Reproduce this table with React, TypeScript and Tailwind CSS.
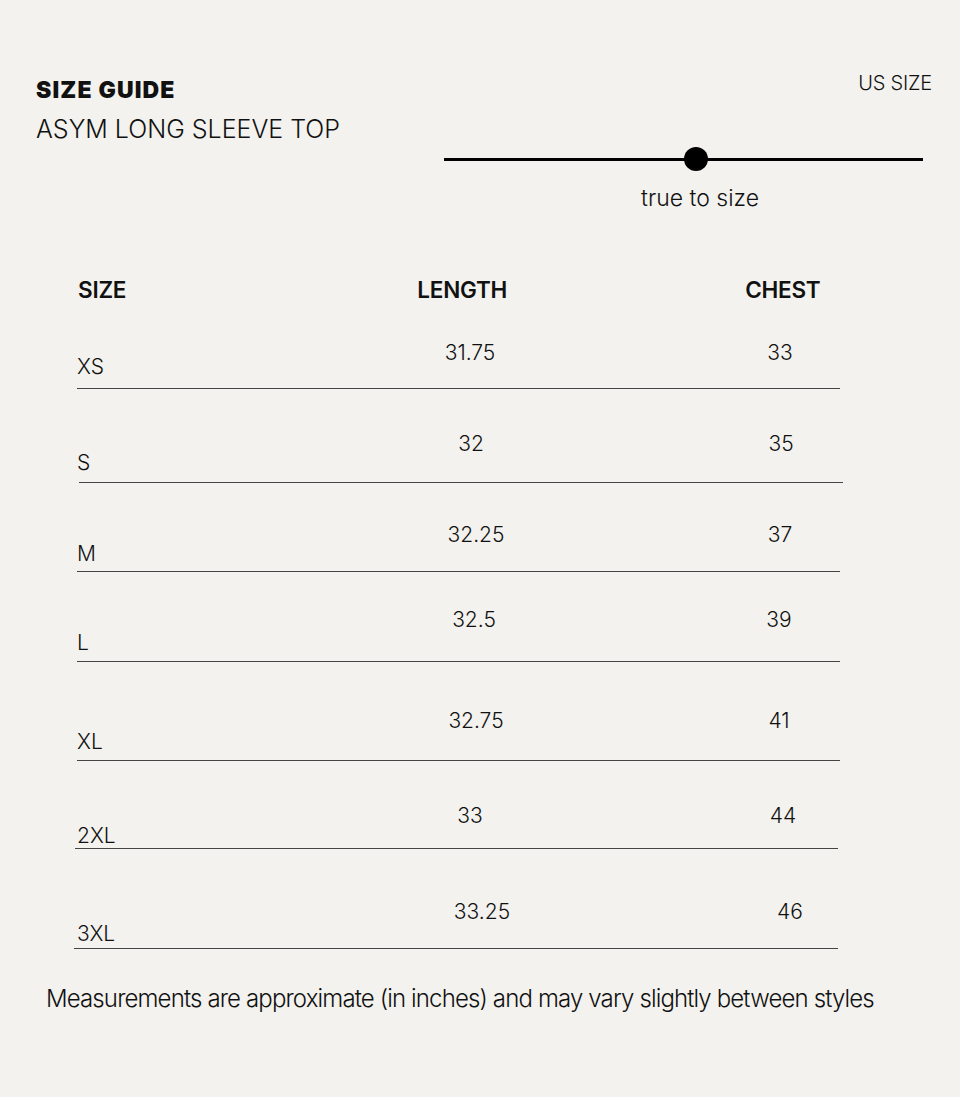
const rows = [
  { size: "XS", length: "31.75", chest: "33", h: "h-[81px]", lp: "pb-[9px]", vp: "pb-[23px]", lx: "ml-[323px]", cx: "ml-[260px]" },
  { size: "S", length: "32", chest: "35", h: "h-[94px]", lp: "pb-[7px]", vp: "pb-[26px]", lx: "ml-[324px]", cx: "ml-[260px]", line: "ml-[2px] w-[764px]" },
  { size: "M", length: "32.25", chest: "37", h: "h-[89px]", lp: "pb-[5px]", vp: "pb-[24px]", lx: "ml-[329px]", cx: "ml-[254px]" },
  { size: "L", length: "32.5", chest: "39", h: "h-[90px]", lp: "pb-[6px]", vp: "pb-[29px]", lx: "ml-[327px]", cx: "ml-[255px]" },
  { size: "XL", length: "32.75", chest: "41", h: "h-[99px]", lp: "pb-[6px]", vp: "pb-[27px]", lx: "ml-[329px]", cx: "ml-[253px]" },
  { size: "2XL", length: "33", chest: "44", h: "h-[88px]", lp: "pb-[0px]", vp: "pb-[20px]", lx: "ml-[323px]", cx: "ml-[263px]", line: "-ml-[2px] w-[763px]" },
  { size: "3XL", length: "33.25", chest: "46", h: "h-[100px]", lp: "pb-[2px]", vp: "pb-[24px]", lx: "ml-[335px]", cx: "ml-[258px]", line: "-ml-[3px] w-[764px]" },
];

export default function App() {
  return (
    <div className="w-[960px] h-[1097px] bg-[#f3f2ee] text-[#111] font-['Inter',sans-serif] overflow-hidden">
      <div className="flex justify-between pt-[70px] pl-[36px] pr-[28px]">
        <div className="flex flex-col">
          <div className="text-[23px] leading-[36px] font-black tracking-[0.05em] mt-[2px]">SIZE GUIDE</div>
          <div className="mt-[6px] text-[25px] leading-[30px] font-light">ASYM LONG SLEEVE TOP</div>
        </div>
        <div className="flex flex-col items-end">
          <div className="text-[20px] leading-[24px] font-light tracking-[-0.01em] mt-[1px]">US SIZE</div>
          <div className="mt-[52px] mr-[9px] w-[479px] flex flex-col items-center">
            <div className="w-full h-[24px] flex items-center justify-center relative">
              <div className="w-full h-[3px] bg-black"></div>
              <div className="absolute left-[240px] top-0 w-[24px] h-[24px] rounded-full bg-black"></div>
            </div>
            <div className="mt-[14px] ml-[33px] text-[23px] leading-[26px] font-light">true to size</div>
          </div>
        </div>
      </div>

      <div className="ml-[77px] mt-[61px] w-[763px]">
        <div className="flex h-[36px] items-center text-[22.5px] font-semibold tracking-[-0.01em]">
          <div className="ml-[1px]">SIZE</div>
          <div className="ml-[291px]">LENGTH</div>
          <div className="ml-[238px]">CHEST</div>
        </div>
        {rows.map((r) => (
          <div key={r.size} className={`${r.h} flex flex-col`}>
            <div className="flex flex-1 items-end text-[21px] font-light">
              <div className={`w-[40px] ${r.lp} leading-[24px]`}>{r.size}</div>
              <div className={`${r.lx} ${r.vp} w-[60px] text-center leading-[24px]`}>{r.length}</div>
              <div className={`${r.cx} ${r.vp} w-[40px] text-center leading-[24px]`}>{r.chest}</div>
            </div>
            <div className={`h-[1px] bg-[#444] ${r.line ?? "w-[763px]"}`}></div>
          </div>
        ))}
      </div>

      <div className="ml-[46px] mt-[37px] text-[24px] leading-[26px] font-light tracking-[-0.036em]">
        Measurements are approximate (in inches) and may vary slightly between styles
      </div>
    </div>
  );
}
